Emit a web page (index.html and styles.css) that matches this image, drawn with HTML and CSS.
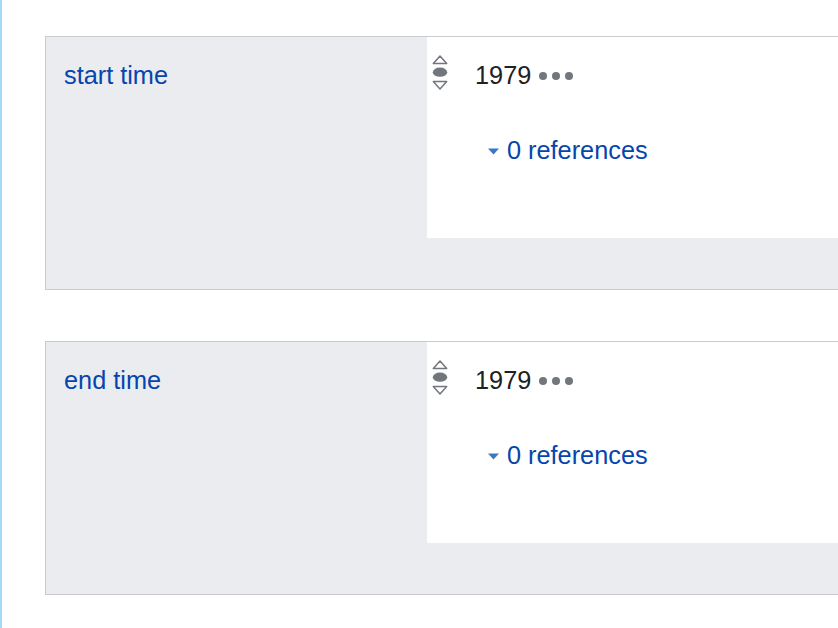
FILE: index.html
```html
<!DOCTYPE html>
<html>
<head>
<meta charset="utf-8">
<link rel="stylesheet" href="styles.css">
</head>
<body>
<div class="page">
  <div class="group">
    <div class="label"><a class="link" href="#">start time</a></div>
    <div class="values">
      <div class="statement">
        <svg class="rank" width="16" height="36" viewBox="0 0 16 36">
          <polygon points="1.3,8.4 14.7,8.4 8,1" fill="none" stroke="#72777d" stroke-width="1.5" stroke-linejoin="round"/>
          <ellipse cx="8" cy="17.2" rx="7.2" ry="4.6" fill="#72777d"/>
          <polygon points="1.3,26.6 14.7,26.6 8,34" fill="none" stroke="#72777d" stroke-width="1.5" stroke-linejoin="round"/>
        </svg>
        <div class="main">
          <div class="value-line">
            <span class="value">1979</span>
            <span class="dots"><i></i><i></i><i></i></span>
          </div>
          <div class="refs">
            <svg class="toggler" width="11" height="7" viewBox="0 0 11 7"><polygon points="0,0.5 11,0.5 5.5,6.5" fill="#3b78c2"/></svg>
            <a class="link" href="#">0 references</a>
          </div>
        </div>
      </div>
      <div class="toolbar"></div>
    </div>
  </div>
  <div class="group">
    <div class="label"><a class="link" href="#">end time</a></div>
    <div class="values">
      <div class="statement">
        <svg class="rank" width="16" height="36" viewBox="0 0 16 36">
          <polygon points="1.3,8.4 14.7,8.4 8,1" fill="none" stroke="#72777d" stroke-width="1.5" stroke-linejoin="round"/>
          <ellipse cx="8" cy="17.2" rx="7.2" ry="4.6" fill="#72777d"/>
          <polygon points="1.3,26.6 14.7,26.6 8,34" fill="none" stroke="#72777d" stroke-width="1.5" stroke-linejoin="round"/>
        </svg>
        <div class="main">
          <div class="value-line">
            <span class="value">1979</span>
            <span class="dots"><i></i><i></i><i></i></span>
          </div>
          <div class="refs">
            <svg class="toggler" width="11" height="7" viewBox="0 0 11 7"><polygon points="0,0.5 11,0.5 5.5,6.5" fill="#3b78c2"/></svg>
            <a class="link" href="#">0 references</a>
          </div>
        </div>
      </div>
      <div class="toolbar"></div>
    </div>
  </div>
</div>
</body>
</html>
```
FILE: styles.css
```css
html, body {
  margin: 0;
  padding: 0;
  background: #ffffff;
  overflow: hidden;
}
body {
  font-family: "Liberation Sans", Arial, sans-serif;
  font-size: 25.3px;
  color: #202122;
}
.page {
  border-left: 2px solid #a7d7f9;
  min-height: 628px;
  width: 838px;
  box-sizing: border-box;
  padding: 36px 0 0 43px;
}
.group {
  display: flex;
  border: 1px solid #c8ccd1;
  border-right: 0;
  background: #eaecf0;
  margin-bottom: 51px;
}
.label {
  width: 363px;
  flex: none;
  padding: 23px 0 0 18px;
  line-height: 30px;
}
.link {
  color: #0645ad;
  text-decoration: none;
}
.values {
  flex: 1;
  display: flex;
  flex-direction: column;
}
.statement {
  background: #ffffff;
  height: 201px;
  display: flex;
  align-items: flex-start;
  padding-left: 5px;
}
.rank {
  margin-top: 18px;
  flex: none;
}
.main {
  margin-left: 27px;
  padding-top: 23px;
}
.value-line {
  display: flex;
  align-items: center;
  line-height: 30px;
  height: 30px;
}
.dots {
  display: flex;
  gap: 5px;
  margin-left: 8px;
  margin-top: 2px;
}
.dots i {
  display: block;
  width: 8px;
  height: 8px;
  border-radius: 50%;
  background: #72777d;
}
.refs {
  display: flex;
  align-items: center;
  margin-top: 45px;
  margin-left: 13px;
  line-height: 30px;
  height: 30px;
}
.toggler {
  margin-right: 8px;
  margin-top: 2px;
}
.toolbar {
  height: 51px;
}
```
